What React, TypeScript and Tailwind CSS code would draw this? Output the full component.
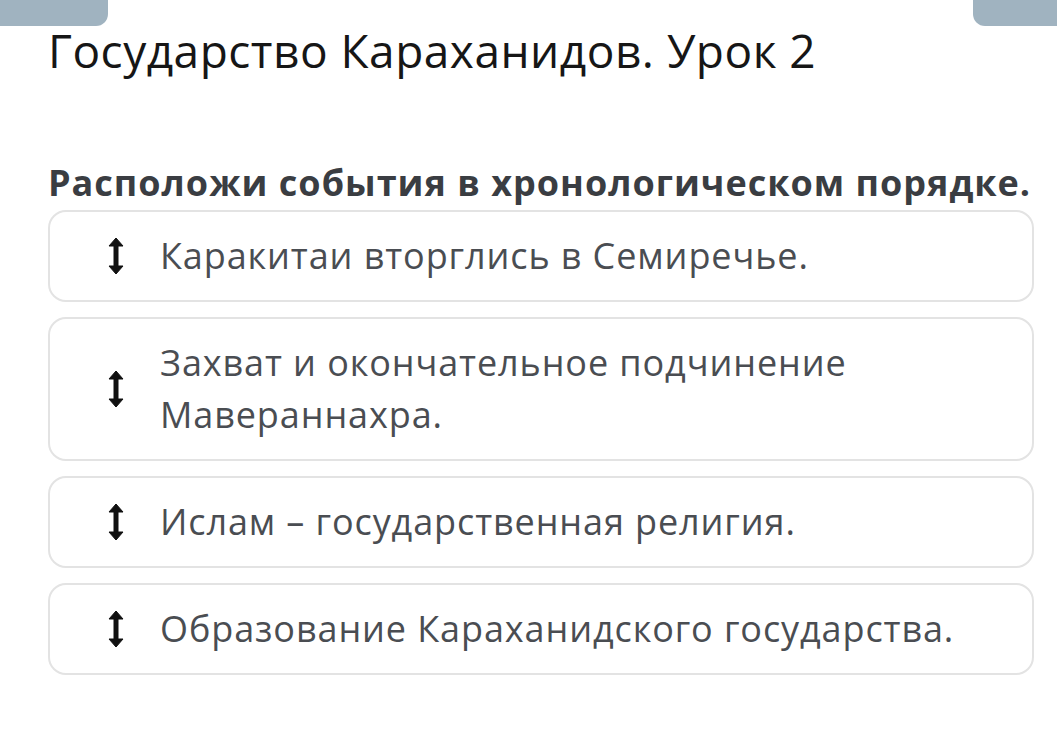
const items = [
  "Каракитаи вторглись в Семиречье.",
  "Захват и окончательное подчинение Мавераннахра.",
  "Ислам – государственная религия.",
  "Образование Караханидского государства.",
];

const SortIcon = () => (
  <svg width="16" height="38" viewBox="0 0 16 38" className="shrink-0">
    <path d="M8 1 L15 9 L10 9 L10 29 L15 29 L8 37 L1 29 L6 29 L6 9 L1 9 Z" fill="#111" strokeLinejoin="round" stroke="#111" strokeWidth="1" />
  </svg>
);

export default function App() {
  return (
    <div className="min-h-[739px] w-[1057px] bg-white font-['Open_Sans',sans-serif]">
      {/* top tabs cut off by the screenshot */}
      <div className="flex h-[26px] justify-between">
        <div className="w-[108px] rounded-br-[12px] bg-[#a0b3c0]" />
        <div className="w-[84px] rounded-bl-[12px] bg-[#a0b3c0]" />
      </div>

      <div className="pl-[48px] pr-[23px]">
        <h1 className="whitespace-nowrap text-[46px] leading-[48px] tracking-[0.5px] text-[#161616]">
          Государство Караханидов. Урок 2
        </h1>

        <h2 className="mt-[91px] whitespace-nowrap text-[36px] font-bold leading-[36px] tracking-[1px] text-[#3a3d42]">
          Расположи события в хронологическом порядке.
        </h2>

        <div className="mt-[9px] flex flex-col gap-[15px]">
          {items.map((text) => (
            <div
              key={text}
              className="flex items-center rounded-[18px] border-2 border-[#e3e3e3] py-[18px] pl-[58px] pr-[40px]"
            >
              <SortIcon />
              <span className="ml-[36px] text-[36px] leading-[52px] tracking-[0.9px] text-[#4a4d52]">{text}</span>
            </div>
          ))}
        </div>
      </div>
    </div>
  );
}
